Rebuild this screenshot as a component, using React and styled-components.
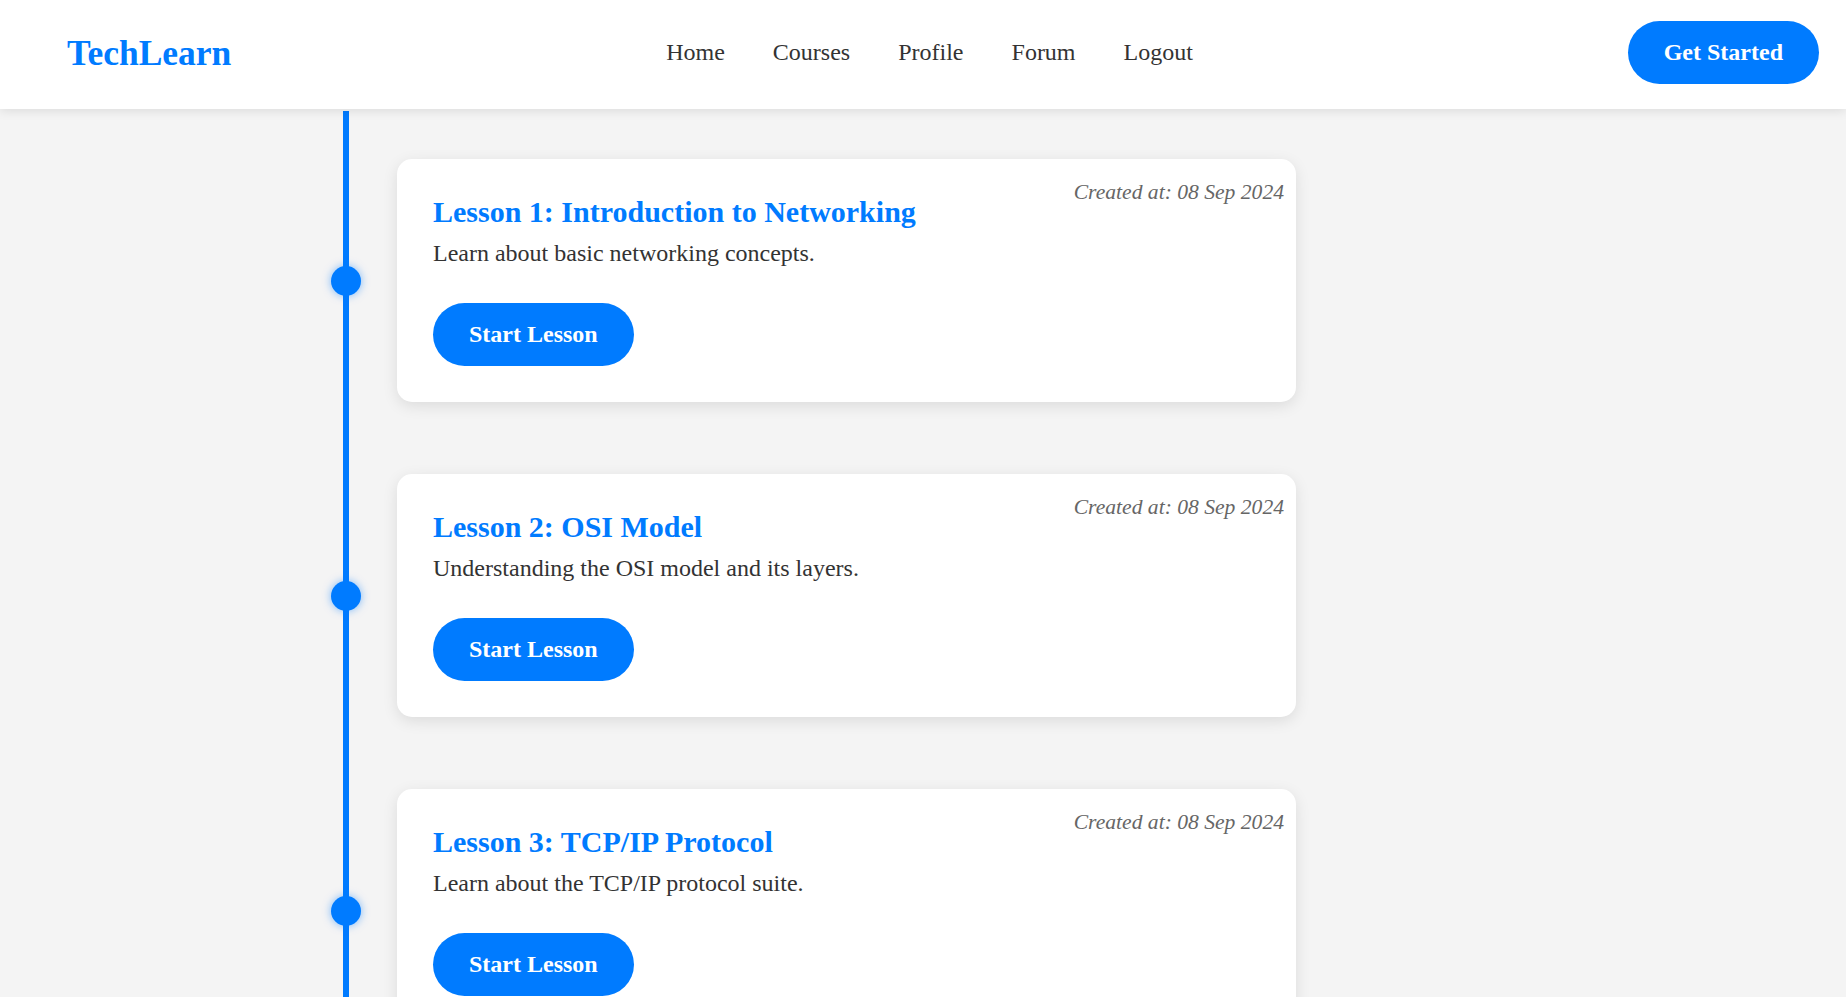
import React from "react"
import styled, { createGlobalStyle } from "styled-components";

const GlobalStyle = createGlobalStyle`
    body {
        margin: 0;
        background-color: #f4f4f4;
        font-family: "Liberation Serif", "Times New Roman", serif;
        color: #333;
    }
`

const Header = styled.header`
    position: relative;
    z-index: 2;
    display: flex;
    justify-content: space-between;
    align-items: center;
    padding: 21px 27px 25px 67px;
    background-color: #fff;
    box-shadow: 0 2px 10px rgba(0, 0, 0, 0.1);
`

const Logo = styled.div`
    font-size: 35.5px;
    font-weight: bold;
    color: #007bff;
`

const Nav = styled.nav`
    display: flex;
    gap: 48px;
`

const NavLink = styled.a`
    font-size: 24px;
    color: #333;
    text-decoration: none;
    cursor: pointer;
`

const PillButton = styled.button`
    font-family: inherit;
    font-size: 24px;
    font-weight: bold;
    line-height: normal;
    padding: 18px 36px;
    border: none;
    border-radius: 32px;
    background-color: #007bff;
    color: #fff;
    cursor: pointer;
`

const Main = styled.main`
    padding-top: 50px;
`

const Timeline = styled.div`
    position: relative;
    margin-left: 331px;
    width: 966px;

    &::before {
        content: "";
        position: absolute;
        top: -48px;
        bottom: 0;
        left: 12px;
        width: 6px;
        background-color: #007bff;
    }
`

const Item = styled.div`
    display: flex;
    align-items: center;
    gap: 36px;
    margin-bottom: 72px;
`

const Dot = styled.span`
    position: relative;
    z-index: 1;
    flex-shrink: 0;
    width: 30px;
    height: 30px;
    border-radius: 50%;
    background-color: #007bff;
    box-shadow: 0 0 8px rgba(0, 123, 255, 0.5);
`

const Card = styled.div`
    position: relative;
    box-sizing: border-box;
    width: 899px;
    padding: 36px;
    background-color: #fff;
    border-radius: 15px;
    box-shadow: 0 4px 15px rgba(0, 0, 0, 0.1);
`

const CreatedAt = styled.span`
    position: absolute;
    top: 21px;
    right: 12px;
    font-size: 21.6px;
    font-style: italic;
    color: #666;
`

const Title = styled.h3`
    margin: 0 0 11px;
    font-size: 30px;
    color: #007bff;
`

const Desc = styled.p`
    margin: 0 0 36px;
    font-size: 24px;
    color: #333;
`

const lessons = [
    { id: 1, title: "Lesson 1: Introduction to Networking", desc: "Learn about basic networking concepts." },
    { id: 2, title: "Lesson 2: OSI Model", desc: "Understanding the OSI model and its layers." },
    { id: 3, title: "Lesson 3: TCP/IP Protocol", desc: "Learn about the TCP/IP protocol suite." },
]

function App() {

    return(
        <>
            <GlobalStyle/>
            <Header>
                <Logo>TechLearn</Logo>
                <Nav>
                    <NavLink>Home</NavLink>
                    <NavLink>Courses</NavLink>
                    <NavLink>Profile</NavLink>
                    <NavLink>Forum</NavLink>
                    <NavLink>Logout</NavLink>
                </Nav>
                <PillButton>Get Started</PillButton>
            </Header>
            <Main>
                <Timeline>
                    {lessons.map(lesson => (
                        <Item key={lesson.id}>
                            <Dot/>
                            <Card>
                                <CreatedAt>Created at: 08 Sep 2024</CreatedAt>
                                <Title>{lesson.title}</Title>
                                <Desc>{lesson.desc}</Desc>
                                <PillButton>Start Lesson</PillButton>
                            </Card>
                        </Item>
                    ))}
                </Timeline>
            </Main>
        </>
    )
}

export default App;
